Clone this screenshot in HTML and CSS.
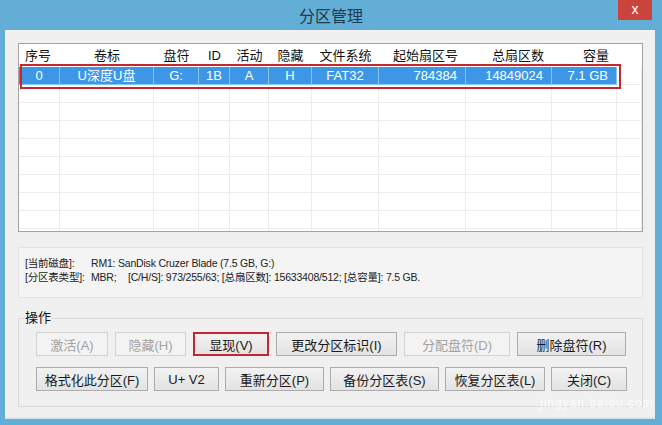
FILE: index.html
```html
<!DOCTYPE html>
<html lang="zh-CN">
<head>
    <meta charset="UTF-8">
    <title>分区管理</title>
    <link rel="stylesheet" href="styles.css">
</head>
<body>
<div class="window">
    <div class="titlebar">
        <span class="title">分区管理</span>
        <span class="close">x</span>
    </div>

    <div class="client">
        <div class="list">
            <div class="lrow head">
                <span class="cell c1 left">序号</span>
                <span class="cell c2">卷标</span>
                <span class="cell c3">盘符</span>
                <span class="cell c4">ID</span>
                <span class="cell c5">活动</span>
                <span class="cell c6">隐藏</span>
                <span class="cell c7">文件系统</span>
                <span class="cell c8 right">起始扇区号</span>
                <span class="cell c9 right">总扇区数</span>
                <span class="cell c10 right">容量</span>
                <span class="cell c11"></span>
            </div>
            <div class="lrow sel">
                <span class="cell c1">0</span>
                <span class="cell c2">U深度U盘</span>
                <span class="cell c3">G:</span>
                <span class="cell c4">1B</span>
                <span class="cell c5">A</span>
                <span class="cell c6">H</span>
                <span class="cell c7">FAT32</span>
                <span class="cell c8 right">784384</span>
                <span class="cell c9 right">14849024</span>
                <span class="cell c10 right">7.1 GB</span>
                <span class="cell c11"></span>
            </div>
            <div class="lrow"><span class="cell c1"></span><span class="cell c2"></span><span class="cell c3"></span><span class="cell c4"></span><span class="cell c5"></span><span class="cell c6"></span><span class="cell c7"></span><span class="cell c8"></span><span class="cell c9"></span><span class="cell c10"></span><span class="cell c11"></span></div>
            <div class="lrow"><span class="cell c1"></span><span class="cell c2"></span><span class="cell c3"></span><span class="cell c4"></span><span class="cell c5"></span><span class="cell c6"></span><span class="cell c7"></span><span class="cell c8"></span><span class="cell c9"></span><span class="cell c10"></span><span class="cell c11"></span></div>
            <div class="lrow"><span class="cell c1"></span><span class="cell c2"></span><span class="cell c3"></span><span class="cell c4"></span><span class="cell c5"></span><span class="cell c6"></span><span class="cell c7"></span><span class="cell c8"></span><span class="cell c9"></span><span class="cell c10"></span><span class="cell c11"></span></div>
            <div class="lrow"><span class="cell c1"></span><span class="cell c2"></span><span class="cell c3"></span><span class="cell c4"></span><span class="cell c5"></span><span class="cell c6"></span><span class="cell c7"></span><span class="cell c8"></span><span class="cell c9"></span><span class="cell c10"></span><span class="cell c11"></span></div>
            <div class="lrow"><span class="cell c1"></span><span class="cell c2"></span><span class="cell c3"></span><span class="cell c4"></span><span class="cell c5"></span><span class="cell c6"></span><span class="cell c7"></span><span class="cell c8"></span><span class="cell c9"></span><span class="cell c10"></span><span class="cell c11"></span></div>
            <div class="lrow"><span class="cell c1"></span><span class="cell c2"></span><span class="cell c3"></span><span class="cell c4"></span><span class="cell c5"></span><span class="cell c6"></span><span class="cell c7"></span><span class="cell c8"></span><span class="cell c9"></span><span class="cell c10"></span><span class="cell c11"></span></div>
            <div class="lrow"><span class="cell c1"></span><span class="cell c2"></span><span class="cell c3"></span><span class="cell c4"></span><span class="cell c5"></span><span class="cell c6"></span><span class="cell c7"></span><span class="cell c8"></span><span class="cell c9"></span><span class="cell c10"></span><span class="cell c11"></span></div>
            <div class="lrow"><span class="cell c1"></span><span class="cell c2"></span><span class="cell c3"></span><span class="cell c4"></span><span class="cell c5"></span><span class="cell c6"></span><span class="cell c7"></span><span class="cell c8"></span><span class="cell c9"></span><span class="cell c10"></span><span class="cell c11"></span></div>
            <div class="lrow"><span class="cell c1"></span><span class="cell c2"></span><span class="cell c3"></span><span class="cell c4"></span><span class="cell c5"></span><span class="cell c6"></span><span class="cell c7"></span><span class="cell c8"></span><span class="cell c9"></span><span class="cell c10"></span><span class="cell c11"></span></div>
            <div class="mark"></div>
        </div>

        <div class="info">
            <div class="info-line">
                <span class="info-key">[当前磁盘]:</span>
                <span>RM1: SanDisk Cruzer Blade (7.5 GB, G:)</span>
            </div>
            <div class="info-line">
                <span class="info-key">[分区表类型]:</span>
                <span class="info-type">MBR;</span>
                <span>[C/H/S]: 973/255/63; [总扇区数]: 15633408/512; [总容量]: 7.5 GB.</span>
            </div>
        </div>

        <fieldset class="ops">
            <legend>操作</legend>
            <div class="btn-row">
                <button class="btn disabled b-activate">激活(A)</button>
                <button class="btn disabled b-hide">隐藏(H)</button>
                <button class="btn marked b-show">显现(V)</button>
                <button class="btn b-changeid">更改分区标识(I)</button>
                <button class="btn disabled b-assign">分配盘符(D)</button>
                <button class="btn b-remove">删除盘符(R)</button>
            </div>
            <div class="btn-row second">
                <button class="btn b-format">格式化此分区(F)</button>
                <button class="btn b-uv2">U+ V2</button>
                <button class="btn b-repart">重新分区(P)</button>
                <button class="btn b-backup">备份分区表(S)</button>
                <button class="btn b-restore">恢复分区表(L)</button>
                <button class="btn b-close">关闭(C)</button>
            </div>
        </fieldset>
    </div>

    <div class="watermark">jingyan.baidu.com</div>
</div>
</body>
</html>
```

FILE: styles.css
```css
body {
    margin: 0;
    width: 662px;
    height: 425px;
    overflow: hidden;
    font-family: "Liberation Sans", "Noto Sans CJK SC", sans-serif;
    color: #1a1a1a;
}

.window {
    position: relative;
    width: 662px;
    height: 425px;
    background: #62aed7;
    display: flex;
    flex-direction: column;
}

.titlebar {
    position: relative;
    height: 30px;
    display: flex;
    justify-content: center;
    align-items: center;
}

.title {
    font-family: "Noto Sans CJK SC", sans-serif;
    font-size: 16px;
    color: #1d3b4f;
}

.close {
    position: absolute;
    top: 0;
    right: 10px;
    width: 34px;
    height: 20px;
    background: #c9443c;
    color: #fff;
    font-size: 14px;
    line-height: 18px;
    text-align: center;
}

.client {
    flex: 1;
    margin: 0 7px 6px 5px;
    background: #f0f0f0;
    padding: 13px 12px 0 13px;
    border-bottom: 2px solid #d6e7f1;
}

/* list view */
.list {
    position: relative;
    height: 189px;
    box-sizing: border-box;
    border: 1px solid #a3a3a3;
    background: #fff;
    overflow: hidden;
}

.lrow {
    display: flex;
    height: 18px;
}

.lrow.head {
    height: 23px;
}

.cell {
    box-sizing: border-box;
    height: 100%;
    padding: 0 4px;
    border-right: 1px solid #ececec;
    border-bottom: 1px solid #ececec;
    font-size: 13px;
    line-height: 17px;
    text-align: center;
    white-space: nowrap;
    overflow: hidden;
}

.head .cell {
    border: none;
    line-height: 23px;
    color: #111;
}

.cell.left { text-align: left; padding-left: 6px; }
.cell.right { text-align: right; padding-right: 8px; }

.c1 { width: 41px; }
.c2 { width: 94px; }
.c3 { width: 45px; }
.c4 { width: 31px; }
.c5 { width: 39px; }
.c6 { width: 43px; }
.c7 { width: 67px; }
.c8 { width: 87px; }
.c9 { width: 86px; }
.c10 { width: 65px; }
.c11 { flex: 1; }

.sel .cell {
    background: #3d97e6;
    color: #fff;
    border-color: #8cc2ef;
}

.sel .cell.c11 {
    background: #fff;
    border-color: #ececec;
}

.mark {
    position: absolute;
    left: 1px;
    top: 20px;
    width: 601px;
    height: 25px;
    box-sizing: border-box;
    border: 2px solid #c4272d;
}

/* disk info */
.info {
    margin-top: 15px;
    height: 51px;
    box-sizing: border-box;
    border: 1px solid #e2e2e2;
    background: #f4f4f4;
    padding: 8px 6px;
    font-size: 10.5px;
    letter-spacing: -0.2px;
    line-height: 14px;
    color: #222;
}

.info-line {
    display: flex;
    white-space: nowrap;
}

.info-key {
    flex-shrink: 0;
    width: 66px;
}

.info-type {
    flex-shrink: 0;
    width: 37px;
}

/* operations */
.ops {
    margin: 13px 0 0;
    border: 1px solid #dadada;
    padding: 7px 15px 15px 17px;
}

.ops legend {
    margin-left: -12px;
    padding: 0 1px;
    font-size: 13px;
    line-height: 14px;
    color: #111;
}

.btn-row {
    display: flex;
    gap: 7px;
}

.btn-row.second {
    margin-top: 11px;
    gap: 6px;
}

.btn {
    height: 24px;
    box-sizing: border-box;
    padding: 0;
    border: 1px solid #acacac;
    background: linear-gradient(#f2f2f2, #e3e3e3);
    font-family: "Liberation Sans", "Noto Sans CJK SC", sans-serif;
    font-size: 13px;
    color: #1a1a1a;
}

.btn.disabled {
    color: #a2a2a2;
    border-color: #d3d3d3;
    background: #f3f3f3;
}

.btn.marked {
    border: 2px solid #c4272d;
}

.b-activate { width: 72px; }
.b-hide { width: 71px; }
.b-show { width: 76px; }
.b-changeid { width: 121px; }
.b-assign { width: 106px; }
.b-remove { width: 109px; }

.b-format { width: 112px; }
.b-uv2 { width: 65px; }
.b-repart { width: 99px; }
.b-backup { width: 109px; }
.b-restore { width: 100px; }
.b-close { width: 76px; }

/* photo watermark */
.watermark {
    position: absolute;
    left: 540px;
    top: 396px;
    font-size: 12px;
    letter-spacing: 1px;
    white-space: nowrap;
    color: rgba(255, 255, 255, 0.8);
    pointer-events: none;
}
```
